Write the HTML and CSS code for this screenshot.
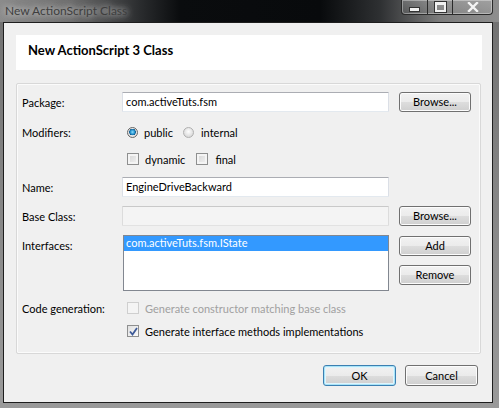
FILE: index.html
```html
<!DOCTYPE html>
<html>
<head>
<meta charset="utf-8">
<link rel="stylesheet" href="styles.css">
</head>
<body>
<div class="window">
  <div class="titlebar">
    <span class="title">New ActionScript Class</span>
    <div class="controls">
      <div class="ctl ctl-min"><span class="min-glyph"></span></div>
      <div class="ctl ctl-max"><span class="max-glyph"></span></div>
      <div class="ctl ctl-close">
        <svg width="12" height="10" viewBox="0 0 12 10"><path d="M2 1 L10 9 M10 1 L2 9" stroke="#f4f4f4" stroke-width="2.4" stroke-linecap="square"/></svg>
      </div>
    </div>
  </div>
  <div class="client">
    <div class="header">New ActionScript 3 Class</div>
    <div class="panel">
      <div class="row r-package">
        <span class="label">Package:</span>
        <div class="input">com.activeTuts.fsm</div>
        <button class="btn">Browse...</button>
      </div>
      <div class="row r-mod">
        <span class="label">Modifiers:</span>
        <div class="opts">
          <span class="radio checked"></span><span class="opt-text">public</span>
          <span class="radio r2"></span><span class="opt-text">internal</span>
        </div>
      </div>
      <div class="row r-chk">
        <span class="label"></span>
        <div class="opts">
          <span class="check"></span><span class="opt-text">dynamic</span>
          <span class="check c2"></span><span class="opt-text">final</span>
        </div>
      </div>
      <div class="row r-name">
        <span class="label">Name:</span>
        <div class="input">EngineDriveBackward</div>
      </div>
      <div class="row r-base">
        <span class="label">Base Class:</span>
        <div class="input disabled"></div>
        <button class="btn">Browse...</button>
      </div>
      <div class="row r-iface">
        <span class="label top">Interfaces:</span>
        <div class="listbox"><div class="item sel">com.activeTuts.fsm.IState</div></div>
        <div class="btncol">
          <button class="btn">Add</button>
          <button class="btn">Remove</button>
        </div>
      </div>
      <div class="row r-code">
        <span class="label">Code generation:</span>
        <div class="opts wide">
          <span class="check dis"></span><span class="opt-text dis-text">Generate constructor matching base class</span>
        </div>
      </div>
      <div class="row r-code2">
        <span class="label"></span>
        <div class="opts wide">
          <span class="check on">
            <svg width="9" height="9" viewBox="0 0 9 9"><path d="M1 4.5 L3.5 7.5 L8 1" fill="none" stroke="#3d5a98" stroke-width="1.8"/></svg>
          </span><span class="opt-text">Generate interface methods implementations</span>
        </div>
      </div>
    </div>
    <div class="footer">
      <button class="btn default">OK</button>
      <button class="btn">Cancel</button>
    </div>
  </div>
</div>
</body>
</html>
```
FILE: styles.css
```css
html, body {
  margin: 0;
  padding: 0;
}
body {
  width: 499px;
  height: 408px;
  overflow: hidden;
  font-family: Lato, "Noto Sans", sans-serif;
  font-size: 11px;
  color: #000;
}
.window {
  width: 499px;
  height: 408px;
  background: linear-gradient(180deg, #707070 0, #8a8a8a 60%, #9a9a9a 100%);
  display: flex;
  flex-direction: column;
}
.titlebar {
  height: 22px;
  flex: none;
  display: flex;
  justify-content: space-between;
  align-items: flex-start;
  background: linear-gradient(90deg, #8c8c8c 0, #6e6e6e 70px, #2a2c2e 140px, #0a0c0e 180px, #080a0c 320px, #2e3032 380px, #7c7c7c 440px, #8e8e8e 499px);
}
.title {
  margin: 2px 0 0 5px;
  font-size: 12px;
  line-height: 17px;
  color: #3e3e3e;
  text-shadow: 0 0 6px rgba(230,230,230,0.9), 0 0 10px rgba(200,200,200,0.7);
}
.controls {
  margin-right: 6px;
  display: flex;
  height: 14px;
  border: 1px solid #2a2a2a;
  border-top: none;
  border-radius: 0 0 4px 4px;
  overflow: hidden;
  box-shadow: inset 0 0 0 1px rgba(255,255,255,0.35);
}
.ctl {
  height: 14px;
  display: flex;
  align-items: center;
  justify-content: center;
  background: linear-gradient(180deg, rgba(255,255,255,0.18), rgba(255,255,255,0.05));
}
.ctl-min { width: 25px; border-right: 1px solid #2a2a2a; }
.ctl-max { width: 24px; border-right: 1px solid #2a2a2a; }
.ctl-close { width: 39px; }
.min-glyph {
  display: block;
  width: 9px;
  height: 3px;
  margin-top: 5px;
  background: #f0f0f0;
  border: 1px solid #333;
}
.max-glyph {
  display: block;
  width: 7px;
  height: 5px;
  border: 2px solid #f0f0f0;
  border-top-width: 3px;
  outline: 1px solid #333;
}
.client {
  margin-left: 3px;
  width: 488px;
  height: 379px;
  border: 1px solid #1e1e1e;
  background: #f0f0f0;
  display: flex;
  flex-direction: column;
}
.header {
  margin: 12px 0 0 12px;
  width: 466px;
  height: 35px;
  box-sizing: border-box;
  background: #fff;
  padding: 8px 0 0 12px;
  font-weight: bold;
  font-size: 13px;
  line-height: 15px;
}
.panel {
  margin: 13px 0 0 12px;
  width: 465px;
  height: 271px;
  box-sizing: border-box;
  border: 1px solid #d8d8d8;
  box-shadow: inset 0 0 0 1px #fbfbfb;
  border-radius: 2px;
  padding: 8px 0 0 5px;
  display: flex;
  flex-direction: column;
}
.row {
  display: grid;
  grid-template-columns: 90px 267px 72px;
  column-gap: 10px;
  align-items: center;
  height: 20px;
}
.r-mod { margin-top: 10px; }
.r-chk { margin-top: 7px; }
.r-name { margin-top: 8px; }
.r-base { margin-top: 9px; }
.r-iface { margin-top: 9px; height: 56px; align-items: start; }
.r-code { margin-top: 7px; }
.r-code2 { margin-top: 3px; }
.label {
  line-height: 15px;
  white-space: nowrap;
}
.label.top { margin-top: 3px; }
.input {
  height: 20px;
  box-sizing: border-box;
  border: 1px solid #abadb3;
  border-left-color: #dbdfe6;
  border-right-color: #dbdfe6;
  border-bottom-color: #e3e9ef;
  border-radius: 1px;
  background: #fff;
  padding: 1px 0 0 3px;
  line-height: 16px;
}
.input.disabled {
  background: #f4f4f4;
  border-color: #c9c9c9 #dcdcdc #e2e2e2;
}
.listbox {
  margin-left: 1px;
  height: 56px;
  box-sizing: border-box;
  border: 1px solid #828790;
  background: #fff;
  padding: 0;
}
.item {
  height: 15px;
  line-height: 14px;
  padding-left: 2px;
}
.item.sel {
  background: #3399ff;
  color: #fff;
}
.btn {
  height: 20px;
  box-sizing: border-box;
  border: 1px solid #707070;
  border-radius: 3px;
  background: linear-gradient(180deg, #f2f2f2 0, #ebebeb 50%, #dddddd 51%, #cfcfcf 100%);
  box-shadow: inset 0 0 0 1px #fcfcfc;
  font-family: inherit;
  font-size: 11px;
  color: #000;
  padding: 0;
  line-height: 16px;
}
.row .btn { width: 72px; }
.btncol {
  margin-top: 1px;
  display: flex;
  flex-direction: column;
  gap: 9px;
}
.opts {
  display: flex;
  align-items: center;
  padding-left: 5px;
  white-space: nowrap;
}
.radio {
  width: 11px;
  height: 11px;
  border-radius: 50%;
  box-sizing: border-box;
  border: 1px solid #8e8f8f;
  background: radial-gradient(circle at 50% 40%, #fefefe 0, #dcdcdc 70%, #cfcfcf 100%);
  margin-right: 6px;
  flex: none;
}
.radio.checked {
  background: radial-gradient(circle at 50% 45%, #8ee0ff 0, #1c8bc8 35%, #1a5b8a 48%, #e8e8e8 52%, #d4d4d4 100%);
  border-color: #666;
}
.radio.r2 { margin-left: 10px; border-color: #b0b0b0; margin-right: 7px; }
.check {
  width: 12px;
  height: 12px;
  box-sizing: border-box;
  border: 1px solid #8e8f8f;
  background: linear-gradient(135deg, #d4d4d4 0, #f4f4f4 100%);
  box-shadow: inset 0 0 0 2px #f4f4f4;
  margin-right: 6px;
  flex: none;
  display: flex;
  align-items: center;
  justify-content: center;
}
.check.c2 { margin-left: 11px; margin-right: 7px; }
.check.dis {
  border-color: #cfcfcf;
  background: #f4f4f4;
  box-shadow: none;
}
.check.on {
  background: linear-gradient(135deg, #e0e0e0 0, #fafafa 100%);
  box-shadow: none;
}
.opt-text { line-height: 15px; }
.dis-text { color: #a0a0a0; }
.footer {
  margin: 11px 14px 0 0;
  display: flex;
  justify-content: flex-end;
  gap: 9px;
}
.footer .btn { width: 73px; height: 21px; }
.btn.default {
  border-color: #3c7fb1;
  box-shadow: inset 0 0 0 1px #a8e4f8, inset 0 0 0 2px #e0f4fc;
}
```
